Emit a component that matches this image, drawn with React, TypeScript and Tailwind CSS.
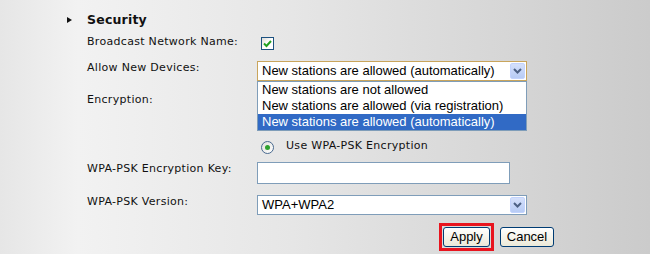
import React from "react";

const label = "text-[11px] leading-[13px] tracking-[0.3px] text-[#111]";
const ctl = "font-['Liberation_Sans',Arial,sans-serif] text-[13px] text-black";

function Arrow() {
  return (
    <div className="w-[15px] h-[16px] rounded-[2px] bg-gradient-to-b from-[#d5e0fb] to-[#b7cbf5] border border-[#c3d3fd] flex items-center justify-center">
      <svg width="9" height="6" viewBox="0 0 9 6">
        <path d="M1 1 L4.5 4.5 L8 1" stroke="#4d6185" strokeWidth="2" fill="none" />
      </svg>
    </div>
  );
}

export default function App() {
  return (
    <div
      className="w-[650px] h-[254px] overflow-hidden relative font-['DejaVu_Sans',Verdana,sans-serif]"
      style={{ background: "linear-gradient(to right, #e6e6e6 0%, #f2f2f2 12%, #e6e6e6 45%, #cbcbcb 100%)" }}
    >
      {/* header */}
      <div className="flex items-center h-[16px] mt-[12px]">
        <div className="w-[67px]" />
        <svg width="5" height="6" viewBox="0 0 5 6" className="mr-[15px]">
          <path d="M0 0 L5 3 L0 6 Z" fill="#111" />
        </svg>
        <span className="text-[12.5px] font-bold text-[#111] tracking-[0.2px]">Security</span>
      </div>

      <div className="pl-[87px]">
        {/* Broadcast */}
        <div className="flex items-start mt-[7px] h-[26px]">
          <div className={`w-[174px] pt-[0px] ${label}`}>Broadcast Network Name:</div>
          <div className="mt-[2px] w-[13px] h-[13px] border border-[#1c5180] bg-gradient-to-br from-[#dcdcd7] via-white to-white flex items-center justify-center">
            <svg width="9" height="8" viewBox="0 0 9 8">
              <path d="M1 3.5 L3.5 6 L8 1" stroke="#21a121" strokeWidth="2" fill="none" />
            </svg>
          </div>
        </div>

        {/* Allow new devices */}
        <div className="flex items-start h-[32px] relative">
          <div className={`w-[170px] ${label}`}>Allow New Devices:</div>
          <div className={`w-[270px] h-[20px] border border-[#c9a55c] bg-white flex items-center justify-between pl-[4px] pr-[1px] ${ctl}`}>
            <span className="leading-[16px]">New stations are allowed (automatically)</span>
            <Arrow />
          </div>
          <div className={`absolute left-[170px] top-[20px] w-[270px] border border-[#7f9db9] bg-white z-10 ${ctl}`}>
            <div className="h-[16px] leading-[16px] pl-[4px]">New stations are not allowed</div>
            <div className="h-[16px] leading-[16px] pl-[4px]">New stations are allowed (via registration)</div>
            <div className="h-[16px] leading-[16px] pl-[4px] bg-[#316ac5] text-white">New stations are allowed (automatically)</div>
          </div>
        </div>

        {/* Encryption */}
        <div className="flex items-start h-[43px]">
          <div className={`w-[170px] ${label}`}>Encryption:</div>
        </div>

        {/* radio */}
        <div className="flex items-start h-[26px]">
          <div className="w-[174px]" />
          <div className="mt-[5px] w-[13px] h-[13px] rounded-full border border-[#4a6a90] bg-gradient-to-br from-[#e0e0dc] to-white flex items-center justify-center">
            <div className="w-[5px] h-[5px] rounded-full bg-[#2ea12e]" />
          </div>
          <span className={`ml-[12px] mt-[3px] ${label}`}>Use WPA-PSK Encryption</span>
        </div>

        {/* key */}
        <div className="flex items-start h-[33px]">
          <div className={`w-[170px] pt-[0px] ${label}`}>WPA-PSK Encryption Key:</div>
          <div className="w-[253px] h-[22px] border border-[#7f9db9] bg-white" />
        </div>

        {/* version */}
        <div className="flex items-start h-[27px]">
          <div className={`w-[170px] ${label}`}>WPA-PSK Version:</div>
          <div className={`w-[270px] h-[20px] border border-[#7f9db9] bg-white flex items-center justify-between pl-[4px] pr-[1px] ${ctl}`}>
            <span className="leading-[16px]">WPA+WPA2</span>
            <Arrow />
          </div>
        </div>

        {/* buttons */}
        <div className="flex items-center h-[29px] pl-[352px]">
          <div className="border-[3px] border-[#e8141e] p-[1px] flex">
            <button className={`w-[47px] h-[20px] rounded-[3px] border border-[#003c74] bg-gradient-to-b from-white to-[#ece9d8] leading-[16px] ${ctl}`}>
              Apply
            </button>
          </div>
          <button className={`ml-[6px] w-[54px] h-[20px] rounded-[3px] border border-[#003c74] bg-gradient-to-b from-white to-[#ece9d8] leading-[16px] ${ctl}`}>
            Cancel
          </button>
        </div>
      </div>
    </div>
  );
}
